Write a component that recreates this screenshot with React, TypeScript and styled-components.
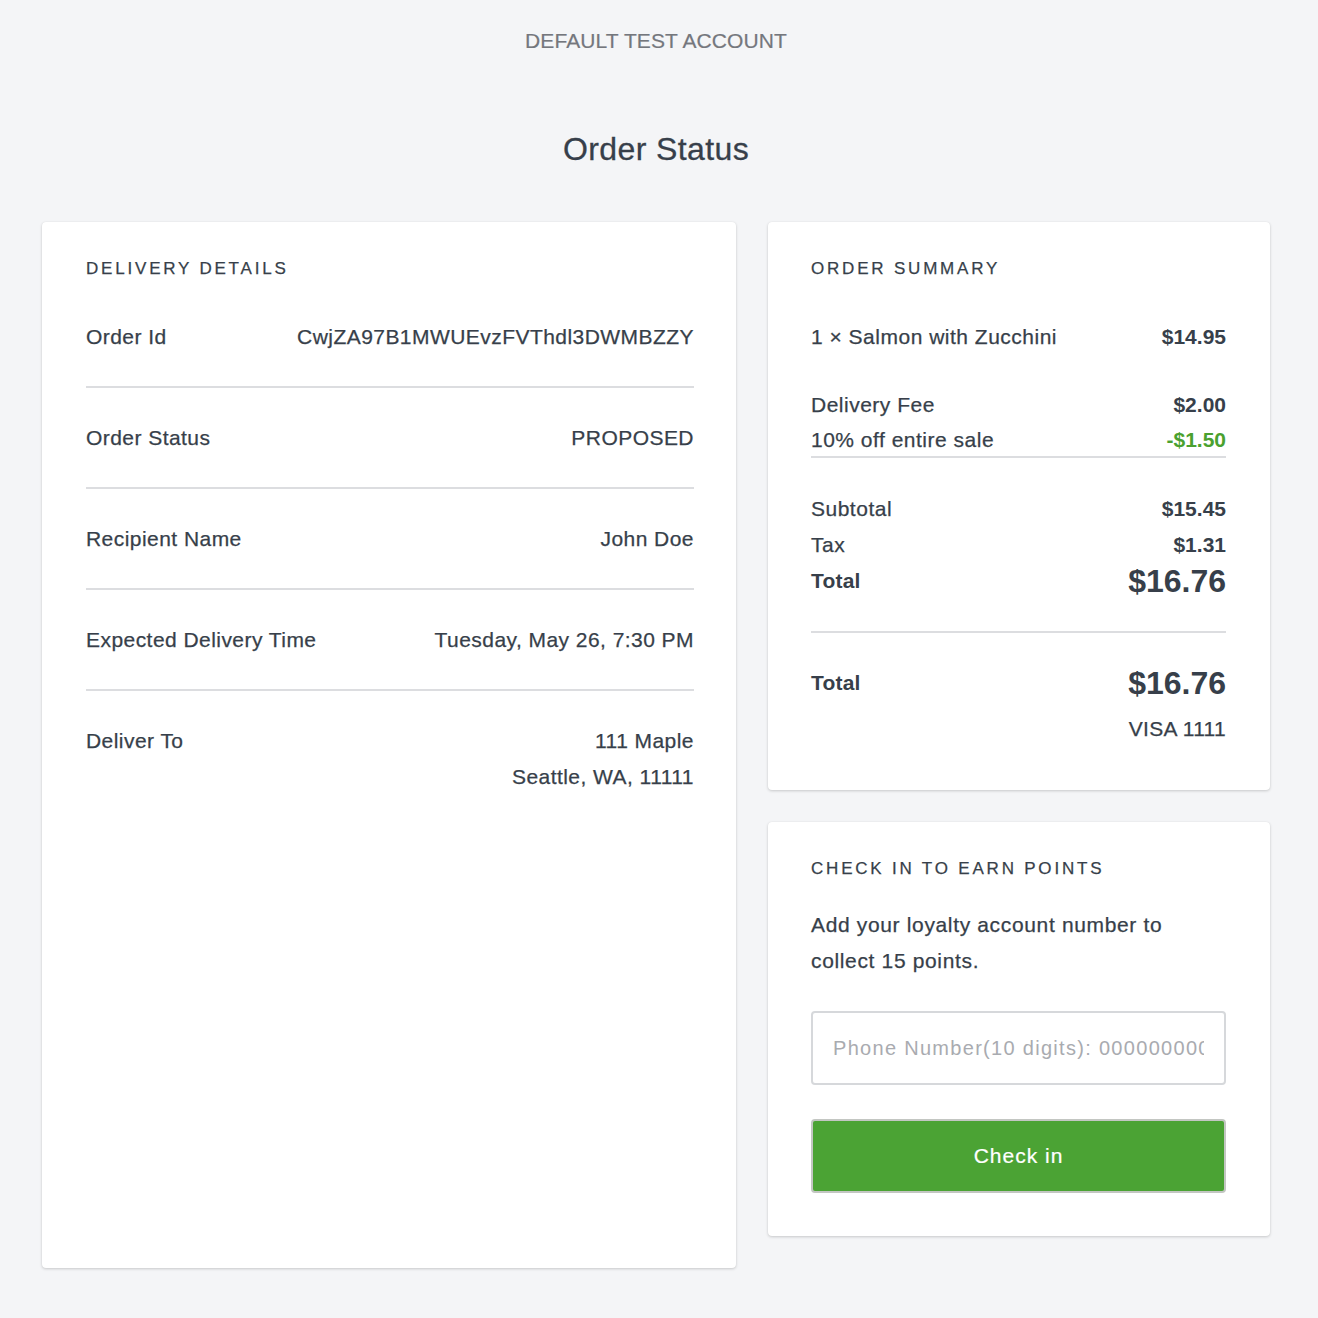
import React, { useState } from "react";
import styled, { createGlobalStyle } from "styled-components";

const GlobalStyle = createGlobalStyle`
  html, body {
    margin: 0;
    padding: 0;
    background: #f4f5f7;
  }
  body {
    font-family: "Liberation Sans", Arial, Helvetica, sans-serif;
    color: #373f4a;
    -webkit-font-smoothing: antialiased;
  }
  * {
    box-sizing: border-box;
  }
`;

const Page = styled.div`
  padding: 28px 0 50px 42px;
`;

const AccountName = styled.div`
  width: 1228px;
  text-align: center;
  font-size: 21px;
  line-height: 26px;
  letter-spacing: 0.1px;
  color: #74777d;
  text-transform: uppercase;
  -webkit-text-stroke: 0.2px #74777d;
`;

const Title = styled.h1`
  width: 1228px;
  margin: 75px 0 0;
  text-align: center;
  font-size: 32px;
  line-height: 40px;
  font-weight: 400;
  letter-spacing: 0.4px;
  color: #373f4a;
  -webkit-text-stroke: 0.3px #373f4a;
`;

const Layout = styled.div`
  margin-top: 53px;
  display: grid;
  grid-template-columns: 694px 502px;
  column-gap: 32px;
  align-items: stretch;
`;

const Side = styled.div`
  display: flex;
  flex-direction: column;
  gap: 32px;
  padding-bottom: 32px;
`;

const Card = styled.section<{ $side?: boolean }>`
  background: #ffffff;
  border-radius: 4px;
  box-shadow: 0 1px 3px rgba(0, 0, 0, 0.18), 0 0 1px rgba(0, 0, 0, 0.08);
  padding: ${(props) => (props.$side ? "35px 44px 43px 43px" : "35px 42px 43px 44px")};
  -webkit-text-stroke: 0.25px #373f4a;
`;

interface IHeading {
  $gap?: number;
}

const Heading = styled.h2<IHeading>`
  margin: 0 0 ${(props) => props.$gap ?? 38}px;
  font-size: 17px;
  line-height: 24px;
  font-weight: 400;
  letter-spacing: 2.8px;
  text-transform: uppercase;
  color: #373f4a;
`;

const DetailRow = styled.div`
  display: flex;
  justify-content: space-between;
  align-items: flex-start;
  padding: 32px 0 31px;
  border-bottom: 2px solid #dcdde0;
  font-size: 21px;
  line-height: 36px;
  letter-spacing: 0.45px;

  &:first-of-type {
    padding-top: 0;
  }
  &:last-of-type {
    border-bottom: 0;
  }
`;

const DetailValue = styled.div`
  text-align: right;
`;

const SummaryGroup = styled.div<{ $divider?: boolean; $gap?: number }>`
  margin-bottom: ${(props) => props.$gap ?? 32}px;
  ${(props) =>
    props.$divider ? "border-bottom: 2px solid #dcdde0;" : ""}
`;

const LineRow = styled.div<{ $tight?: boolean; $spaced?: boolean }>`
  display: flex;
  justify-content: space-between;
  align-items: center;
  height: ${(props) => (props.$tight ? 33 : 36)}px;
  margin-bottom: ${(props) => (props.$spaced ? 32 : 0)}px;
  font-size: 21px;
  letter-spacing: 0.5px;
`;

const Amount = styled.span<{ $green?: boolean; $big?: boolean }>`
  font-weight: 700;
  font-size: ${(props) => (props.$big ? 32 : 21)}px;
  color: ${(props) => (props.$green ? "#4aa12f" : "#373f4a")};
  letter-spacing: 0;
  -webkit-text-stroke: 0;
`;

const Strong = styled.span`
  font-weight: 700;
  letter-spacing: 0.2px;
  -webkit-text-stroke: 0;
`;

const CardNote = styled.div`
  margin-top: 10px;
  text-align: right;
  font-size: 21px;
  line-height: 36px;
  letter-spacing: 0.3px;
`;

const Paragraph = styled.p`
  margin: 0 0 32px;
  font-size: 21px;
  line-height: 36px;
  letter-spacing: 0.65px;
`;

const PhoneInput = styled.input`
  display: block;
  width: 100%;
  height: 74px;
  padding: 0 20px;
  border: 2px solid #d6d8db;
  border-radius: 4px;
  font-family: "Liberation Sans", Arial, sans-serif;
  font-size: 20px;
  letter-spacing: 1.3px;
  color: #373f4a;
  outline: none;
  -webkit-text-stroke: 0;

  &::placeholder {
    color: #a9abb0;
    -webkit-text-stroke: 0;
  }
`;

const CheckInButton = styled.button`
  display: block;
  width: 100%;
  height: 74px;
  margin-top: 34px;
  border: 2px solid #c3c6c2;
  border-radius: 4px;
  background: #4ba334;
  color: #ffffff;
  font-family: "Liberation Sans", Arial, sans-serif;
  font-size: 21px;
  letter-spacing: 1px;
  -webkit-text-stroke: 0.2px #ffffff;
  cursor: pointer;
`;

const details: [string, string[]][] = [
  ["Order Id", ["CwjZA97B1MWUEvzFVThdl3DWMBZZY"]],
  ["Order Status", ["PROPOSED"]],
  ["Recipient Name", ["John Doe"]],
  ["Expected Delivery Time", ["Tuesday, May 26, 7:30 PM"]],
  ["Deliver To", ["111 Maple", "Seattle, WA, 11111"]],
];

const App = () => {
  const [phone, setPhone] = useState("");

  return (
    <>
      <GlobalStyle />
      <Page>
        <AccountName>Default Test Account</AccountName>
        <Title>Order Status</Title>
        <Layout>
          <Card>
            <Heading>Delivery Details</Heading>
            {details.map(([label, lines]) => (
              <DetailRow key={label}>
                <span>{label}</span>
                <DetailValue>
                  {lines.map((line) => (
                    <div key={line}>{line}</div>
                  ))}
                </DetailValue>
              </DetailRow>
            ))}
          </Card>

          <Side>
            <Card $side>
              <Heading>Order Summary</Heading>
              <SummaryGroup>
                <LineRow>
                  <span>1 × Salmon with Zucchini</span>
                  <Amount>$14.95</Amount>
                </LineRow>
              </SummaryGroup>
              <SummaryGroup $divider $gap={33}>
                <LineRow>
                  <span>Delivery Fee</span>
                  <Amount>$2.00</Amount>
                </LineRow>
                <LineRow $tight>
                  <span>10% off entire sale</span>
                  <Amount $green>-$1.50</Amount>
                </LineRow>
              </SummaryGroup>
              <SummaryGroup $divider>
                <LineRow>
                  <span>Subtotal</span>
                  <Amount>$15.45</Amount>
                </LineRow>
                <LineRow>
                  <span>Tax</span>
                  <Amount>$1.31</Amount>
                </LineRow>
                <LineRow $spaced>
                  <Strong>Total</Strong>
                  <Amount $big>$16.76</Amount>
                </LineRow>
              </SummaryGroup>
              <LineRow>
                <Strong>Total</Strong>
                <Amount $big>$16.76</Amount>
              </LineRow>
              <CardNote>VISA 1111</CardNote>
            </Card>

            <Card $side>
              <Heading $gap={26}>Check in to earn points</Heading>
              <Paragraph>
                Add your loyalty account number to
                <br />
                collect 15 points.
              </Paragraph>
              <PhoneInput
                value={phone}
                onChange={(e: React.ChangeEvent<HTMLInputElement>) =>
                  setPhone(e.target.value)
                }
                placeholder="Phone Number(10 digits): 0000000000"
              />
              <CheckInButton>Check in</CheckInButton>
            </Card>
          </Side>
        </Layout>
      </Page>
    </>
  );
};

export default App;
